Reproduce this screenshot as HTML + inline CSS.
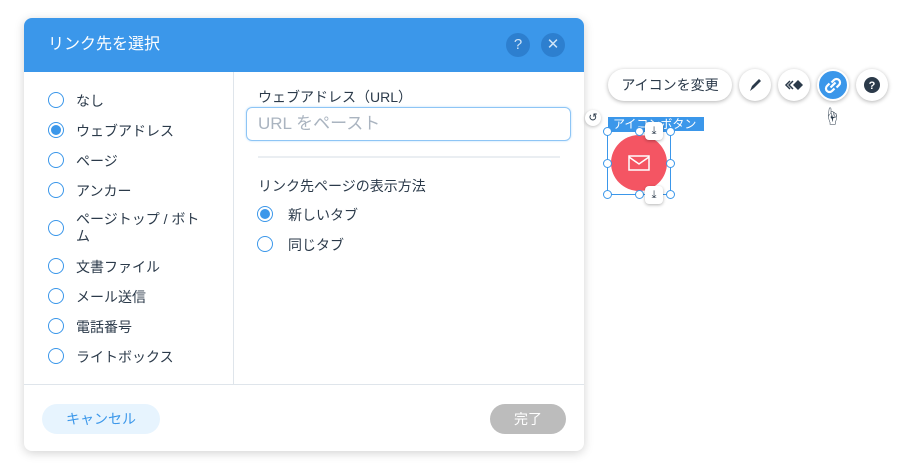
<!DOCTYPE html>
<html><head><meta charset="utf-8"><style>
*{margin:0;padding:0;box-sizing:border-box}
body{width:897px;height:469px;background:#fff;position:relative;overflow:hidden;font-family:"Liberation Sans","Noto Sans CJK JP",sans-serif;color:#2b3a4a}
.a{position:absolute}
.dlg{left:24px;top:18px;width:560px;height:433px;border-radius:8px;background:#fff;box-shadow:0 2px 10px rgba(0,0,0,.18);overflow:hidden}
.hd{left:0;top:0;width:560px;height:54px;background:#3b97ea;color:#fff;font-size:16px;line-height:54px;padding-left:24px}
.hb{width:24px;height:24px;border-radius:50%;background:#2d7fcf;color:#cfe4f8;font-size:15px;text-align:center;line-height:24px;top:15px}
.r{width:16px;height:16px;border:1px solid #3b97ea;border-radius:50%;background:#fff}
.r.on::after{content:"";position:absolute;left:2px;top:2px;width:10px;height:10px;border-radius:50%;background:#3b97ea}
.t{font-size:14px;color:#2b3a4a}
.c{border-radius:50%;width:32px;height:32px;background:#fff;box-shadow:0 1px 4px rgba(0,0,0,.3);top:69px}
.h{width:9px;height:9px;border:1px solid #3b97ea;border-radius:50%;background:#fff}
</style></head><body>
<div class="a dlg">
 <div class="a hd">リンク先を選択</div>
 <div class="a hb" style="left:482px">?</div>
 <div class="a hb" style="left:517px">✕</div>
 <div class="a" style="left:209px;top:54px;width:1px;height:313px;background:#dfe5eb"></div>
 <div class="a" style="left:0;top:366px;width:560px;height:1px;background:#dfe5eb"></div>
</div>
<div class="a r" style="left:48px;top:92px"></div><div class="a t" style="left:76px;top:91px">なし</div>
<div class="a r on" style="left:48px;top:122px"></div><div class="a t" style="left:76px;top:121px">ウェブアドレス</div>
<div class="a r" style="left:48px;top:152px"></div><div class="a t" style="left:76px;top:151px">ページ</div>
<div class="a r" style="left:48px;top:182px"></div><div class="a t" style="left:76px;top:181px">アンカー</div>
<div class="a r" style="left:48px;top:220px"></div><div class="a t" style="left:76px;top:211px;line-height:17px;width:130px">ページトップ / ボトム</div>
<div class="a r" style="left:48px;top:258px"></div><div class="a t" style="left:76px;top:257px">文書ファイル</div>
<div class="a r" style="left:48px;top:288px"></div><div class="a t" style="left:76px;top:287px">メール送信</div>
<div class="a r" style="left:48px;top:318px"></div><div class="a t" style="left:76px;top:317px">電話番号</div>
<div class="a r" style="left:48px;top:348px"></div><div class="a t" style="left:76px;top:347px">ライトボックス</div>
<div class="a t" style="left:258px;top:87px">ウェブアドレス（URL）</div>
<div class="a" style="left:246px;top:107px;width:325px;height:34px;border:1px solid #8ec5f5;border-radius:6px;box-shadow:0 0 2px #b8dcfa;color:#aab4c0;font-size:17px;line-height:32px;padding-left:11px">URL をペースト</div>
<div class="a" style="left:258px;top:156px;width:302px;height:2px;background:#eaeef2"></div>
<div class="a t" style="left:258px;top:176px">リンク先ページの表示方法</div>
<div class="a r on" style="left:257px;top:206px"></div><div class="a t" style="left:288px;top:205px">新しいタブ</div>
<div class="a r" style="left:257px;top:236px"></div><div class="a t" style="left:288px;top:235px">同じタブ</div>
<div class="a" style="left:42px;top:404px;width:118px;height:30px;border-radius:15px;background:#e7f4fe;color:#3b97ea;font-size:14px;text-align:center;line-height:30px">キャンセル</div>
<div class="a" style="left:490px;top:404px;width:76px;height:30px;border-radius:15px;background:#bcbcbc;color:#fff;font-size:14px;text-align:center;line-height:30px">完了</div>
<div class="a" style="left:608px;top:69px;width:124px;height:32px;border-radius:16px;background:#fff;box-shadow:0 1px 4px rgba(0,0,0,.3);font-size:14px;text-align:center;line-height:32px;color:#2b3a4a">アイコンを変更</div>
<div class="a c" style="left:739px"><svg width="32" height="32"><path d="M11 22l2-5 7-7 2 2-7 7z" fill="#2b3a4a"/></svg></div>
<div class="a c" style="left:778px"><svg width="32" height="32"><path d="M12 12l-4 4 4 4M15 12l-4 4 4 4" stroke="#2b3a4a" stroke-width="1.5" fill="none"/><path d="M20 11l5 5-5 5-5-5z" fill="#2b3a4a"/></svg></div>
<div class="a c" style="left:817px;background:#3b97ea;border:2px solid #fff"><svg width="28" height="28"><g stroke="#fff" stroke-width="2.2" fill="none"><path d="M12.5 11.5l2.5-2.5a3.5 3.5 0 0 1 5 5l-2.5 2.5"/><path d="M15.5 17.5l-2.5 2.5a3.5 3.5 0 0 1-5-5l2.5-2.5"/><path d="M11.5 16.5l5-5"/></g></svg></div>
<div class="a c" style="left:856px"><svg width="32" height="32"><circle cx="16" cy="16" r="8" fill="#2b3a4a"/><text x="16" y="20" font-size="11" font-weight="bold" fill="#fff" text-anchor="middle" font-family="Liberation Sans">?</text></svg></div>
<div class="a" style="left:823px;top:103px;font-size:18px">☝</div>
<div class="a" style="left:585px;top:110px;width:16px;height:16px;border-radius:50%;background:#fff;box-shadow:0 1px 3px rgba(0,0,0,.25);font-size:11px;text-align:center;line-height:16px">↺</div>
<div class="a" style="left:608px;top:117px;width:96px;height:14px;background:#3b97ea;color:#fff;font-size:12px;line-height:14px;padding-left:5px">アイコンボタン</div>
<div class="a" style="left:607px;top:131px;width:64px;height:64px;border:1px solid #3b97ea"></div>
<div class="a" style="left:611px;top:135px;width:56px;height:56px;border-radius:50%;background:#f45563"><svg width="56" height="56"><rect x="18" y="21" width="20" height="14" fill="none" stroke="#fff" stroke-width="1.5"/><path d="M18 22l10 7 10-7" fill="none" stroke="#fff" stroke-width="1.5"/></svg></div>
<div class="a h" style="left:603px;top:127px"></div><div class="a h" style="left:635px;top:127px"></div><div class="a h" style="left:666px;top:127px"></div>
<div class="a h" style="left:603px;top:159px"></div><div class="a h" style="left:666px;top:159px"></div>
<div class="a h" style="left:603px;top:190px"></div><div class="a h" style="left:635px;top:190px"></div><div class="a h" style="left:666px;top:190px"></div>
<div class="a" style="left:645px;top:122px;width:18px;height:18px;border-radius:4px;background:#fff;box-shadow:0 1px 3px rgba(0,0,0,.3);font-size:11px;text-align:center;line-height:18px">⤓</div>
<div class="a" style="left:645px;top:186px;width:18px;height:18px;border-radius:4px;background:#fff;box-shadow:0 1px 3px rgba(0,0,0,.3);font-size:11px;text-align:center;line-height:18px">⤓</div>
</body></html>
